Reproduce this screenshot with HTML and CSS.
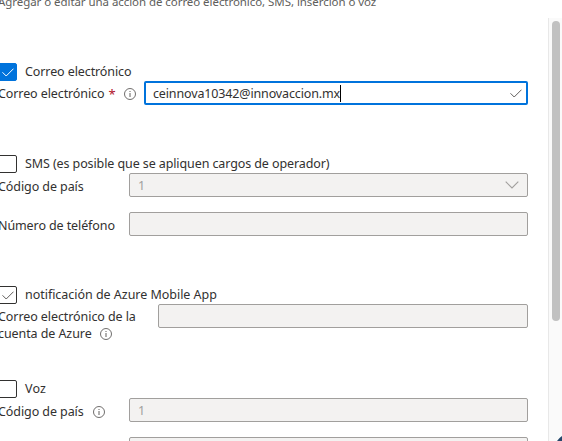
FILE: index.html
```html
<!DOCTYPE html>
<html lang="es">
<head>
<meta charset="utf-8">
<title>Acción de notificación</title>
<link rel="stylesheet" href="styles.css">
</head>
<body>
<svg width="0" height="0" class="defs">
  <symbol id="info" viewBox="0 0 12 12"><circle cx="6" cy="6" r="5.5" fill="none" stroke="currentColor" stroke-width=".9"/><path d="M6 5v4M6 3v1" fill="none" stroke="currentColor"/></symbol>
  <symbol id="check" viewBox="0 0 12 9"><path d="M.5 4.3 4.2 8 11.5.7" fill="none" stroke="currentColor"/></symbol>
</svg>
<header class="subtitle"><span class="w-subtitle">Agregar o editar una acción de correo electrónico, SMS, inserción o voz</span></header>
<div class="panel">
  <main class="form">
    <section class="group">
      <div class="option"><span class="box on"><svg class="tick"><use href="#check"/></svg></span><span class="w-mail">Correo electrónico</span></div>
      <div class="row">
        <div class="label email"><span class="w-mail">Correo electrónico</span><span class="required">*</span><svg class="info"><use href="#info"/></svg></div>
        <div class="field active"><span class="w-address">ceinnova10342@innovaccion.mx</span><i class="caret"></i><svg class="valid"><use href="#check"/></svg></div>
      </div>
    </section>
    <section class="group">
      <div class="option"><span class="box"></span><span class="w-sms">SMS (es posible que se apliquen cargos de operador)</span></div>
      <div class="row">
        <div class="label low"><span class="w-country">Código de país</span></div>
        <div class="field"><span class="value">1</span><svg class="chevron" viewBox="0 0 14 8"><path d="M.7.7 7 7 13.3.7" fill="none" stroke="currentColor" stroke-width="1.1"/></svg></div>
      </div>
      <div class="row next">
        <div class="label low"><span class="w-phone">Número de teléfono</span></div>
        <div class="field"></div>
      </div>
    </section>
    <section class="group azure">
      <div class="option"><span class="box"><svg class="tick"><use href="#check"/></svg></span><span class="w-app">notificación de Azure Mobile App</span></div>
      <div class="row">
        <div class="label wide"><span class="w-account">Correo electrónico de la<br>cuenta de Azure</span><svg class="info"><use href="#info"/></svg></div>
        <div class="field"></div>
      </div>
    </section>
    <section class="group">
      <div class="option"><span class="box"></span><span class="w-voice">Voz</span></div>
      <div class="row">
        <div class="label low"><span class="w-country">Código de país</span><svg class="info country"><use href="#info"/></svg></div>
        <div class="field"><span class="value">1</span></div>
      </div>
      <div class="row next">
        <div class="label"></div>
        <div class="field"></div>
      </div>
    </section>
  </main>
  <aside class="scroll"><div class="thumb"></div></aside>
</div>
<svg class="corner" viewBox="0 0 5 5"><path d="M5 0v5H0Q2 2 5 0" fill="#24476b"/></svg>
</body>
</html>
```
FILE: styles.css
```css
* { box-sizing: border-box; }
body {
  margin: 0;
  height: 441px;
  overflow: hidden;
  background: #fff;
  color: #323130;
  font: 12.5px/18px "Noto Sans", "Open Sans", sans-serif;
  white-space: nowrap;
}
svg { display: block; flex: none; overflow: visible; }
.defs { position: absolute; }
.subtitle { display: flow-root; height: 18px; color: #605e5c; font-size: 11.5px; }
.subtitle span { display: block; margin: -7px 0 0 -2px; }
.w-subtitle { letter-spacing: -.06px; }
.w-mail, .w-phone, .w-sms { letter-spacing: -.1px; }
.w-address { letter-spacing: -.14px; padding-top: 2px; }
.w-app { letter-spacing: -.03px; }
.w-account, .w-country { letter-spacing: -.08px; }
.w-voice { letter-spacing: .2px; }
.value { padding-top: 2px; }
.panel { display: flex; height: 423px; }
.form { width: 548px; padding: 45px 20px 0 0; overflow: hidden; }
.group { margin-bottom: 50px; }
.azure { height: 44px; }
.option { display: flex; align-items: center; gap: 8px; height: 18px; margin-left: -2px; }
.box {
  display: flex;
  align-items: center;
  justify-content: center;
  flex: none;
  width: 19px;
  height: 18px;
  border: 1px solid #323130;
  border-radius: 2px;
  color: #605e5c;
}
.on { background: #0073dc; border-color: #0073dc; color: #fff; }
.tick { width: 12px; height: 9px; }
.row { display: flex; align-items: flex-start; height: 24px; }
.next { margin-top: 15px; }
.label { display: flex; align-items: center; width: 131px; height: 24px; margin-left: -2px; flex: none; }
.low { padding-top: 3px; }
.email { width: 146px; padding-top: 2px; }
.wide { width: 160px; height: 35px; margin-top: 3px; line-height: 17px; align-items: flex-end; }
.required { margin-left: 4px; width: 6px; color: #b0102a; font-size: 13px; }
.info { width: 12px; height: 12px; color: #605e5c; }
.email .info { margin-left: 10px; }
.wide .info { margin: 0 0 2px -36px; }
.country { margin-left: 9px; }
.field {
  display: flex;
  align-items: center;
  flex: 1;
  height: 24px;
  padding: 0 8px;
  border: 1px solid #a19f9d;
  border-radius: 2px;
  background: #f3f2f1;
  color: #a19f9d;
}
.active { border: 2px solid #0073dc; padding: 0 4px 0 7px; background: #fff; color: #323130; }
.caret { width: 1px; height: 17px; background: #000; }
.valid { width: 12px; height: 9px; margin-left: auto; color: #605e5c; }
.chevron { width: 14px; height: 8px; margin-left: auto; }
.scroll { width: 14px; padding: 3px 0 0 3px; border-left: 1px solid #e8e8e8; background: #fafafa; }
.thumb { width: 8px; height: 300px; border-radius: 4px; background: #c1c1c1; }
.corner { position: absolute; right: 0; bottom: 0; width: 5px; height: 5px; }
```
